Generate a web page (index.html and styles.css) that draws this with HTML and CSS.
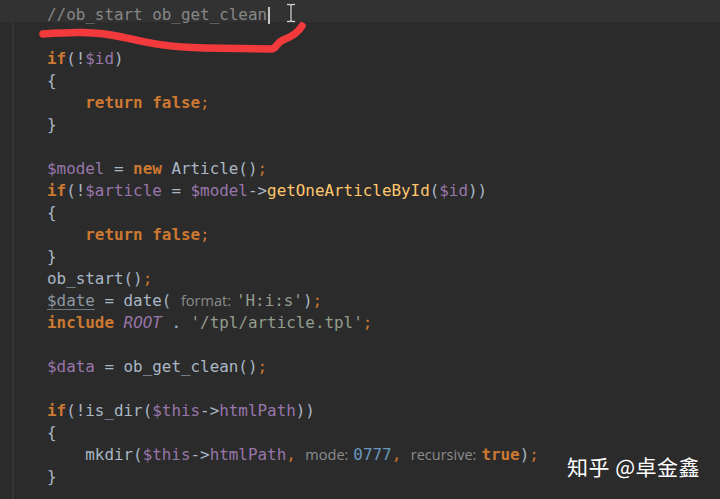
FILE: index.html
```html
<!DOCTYPE html>
<html lang="zh-CN">
<head>
    <meta charset="UTF-8">
    <title>ob_start ob_get_clean</title>
    <link rel="stylesheet" href="styles.css">
</head>
<body>
    <div class="editor">
        <div class="line current"><span class="cm">//ob_start ob_get_clean</span><span class="caret"></span></div>
        <div class="line"> </div>
        <div class="line"><span class="kw">if</span>(!<span class="var">$id</span>)</div>
        <div class="line">{</div>
        <div class="line">    <span class="kw">return false</span><span class="op">;</span></div>
        <div class="line">}</div>
        <div class="line"> </div>
        <div class="line"><span class="var">$model</span> = <span class="kw">new</span> Article()<span class="op">;</span></div>
        <div class="line"><span class="kw">if</span>(!<span class="var">$article</span> = <span class="var">$model</span>-&gt;<span class="fn">getOneArticleById</span>(<span class="var">$id</span>))</div>
        <div class="line">{</div>
        <div class="line">    <span class="kw">return false</span><span class="op">;</span></div>
        <div class="line">}</div>
        <div class="line">ob_start()<span class="op">;</span></div>
        <div class="line"><span class="unused">$date</span> = date( <span class="hint">format:</span><span class="str">'H:i:s'</span>)<span class="op">;</span></div>
        <div class="line"><span class="kw">include</span> <span class="const">ROOT</span> . <span class="str">'/tpl/article.tpl'</span><span class="op">;</span></div>
        <div class="line"> </div>
        <div class="line"><span class="var">$data</span> = ob_get_clean()<span class="op">;</span></div>
        <div class="line"> </div>
        <div class="line"><span class="kw">if</span>(!is_dir(<span class="var">$this</span>-&gt;<span class="var">htmlPath</span>))</div>
        <div class="line">{</div>
        <div class="line">    mkdir(<span class="var">$this</span>-&gt;<span class="var">htmlPath</span><span class="op">,</span> <span class="hint">mode:</span><span class="num">0777</span><span class="op">,</span> <span class="hint">recursive:</span><span class="kw">true</span>)<span class="op">;</span></div>
        <div class="line">}</div>
    </div>

    <!-- red pen mark under the comment -->
    <svg class="scribble" width="320" height="60" viewBox="0 0 320 60">
        <path d="M43 34 C 70 32, 95 31, 122 37 S 165 47, 205 48 L 272 49 C 277 48, 276 43, 283 40 C 291 37, 298 33, 302 26"
              fill="none" stroke="#f23a3c" stroke-width="7.5" stroke-linecap="round" stroke-linejoin="round"/>
    </svg>

    <!-- mouse text cursor -->
    <svg class="ibeam" width="12" height="20" viewBox="0 0 12 20">
        <path d="M2 1.5 H5 L6 2.5 L7 1.5 H10 M6 2.5 V17.5 M2 18.5 H5 L6 17.5 L7 18.5 H10"
              fill="none" stroke="#1e1e1e" stroke-width="3"/>
        <path d="M2 1.5 H5 L6 2.5 L7 1.5 H10 M6 2.5 V17.5 M2 18.5 H5 L6 17.5 L7 18.5 H10"
              fill="none" stroke="#d4d4d4" stroke-width="1.3"/>
    </svg>

    <div class="watermark">知乎 @卓金鑫</div>
</body>
</html>
```

FILE: styles.css
```css
body {
    margin: 0;
    background-color: #2b2b2b;
    overflow: hidden;
}
.editor {
    min-height: 100vh;
    padding-left: 47px;
    font-family: "DejaVu Sans Mono", "Liberation Mono", monospace;
    font-size: 15.9px;
    line-height: 22px;
    color: #a9b7c6;
    /* gutter separator */
    background: linear-gradient(to right, transparent 12px, #353535 12px, #353535 14px, transparent 14px);
}
.line {
    white-space: pre;
    height: 22px;
}
/* highlighted caret row */
.line.current {
    margin-left: -47px;
    padding-left: 47px;
    height: 18px;
    padding-top: 4px;
    margin-bottom: 4px;
    background-color: #323232;
}
.cm {
    color: #878787;
}
.caret {
    display: inline-block;
    width: 2px;
    height: 17px;
    margin-left: 1px;
    vertical-align: -4px;
    background-color: #c4c4c4;
}
.kw {
    color: #cc7832;
    font-weight: bold;
}
.op {
    color: #cc7832;
}
.var {
    color: #9876aa;
}
.fn {
    color: #ffc66d;
}
.const {
    color: #9876aa;
    font-style: italic;
}
.str {
    color: #939d8e;
}
.num {
    color: #6897bb;
}
.unused {
    color: #8c96a3;
    text-decoration: underline;
    text-decoration-color: #6f7780;
    text-underline-offset: 3px;
}
/* inline parameter hints */
.hint {
    font-family: "Open Sans", "Liberation Sans", sans-serif;
    font-size: 14.5px;
    color: #8c8c8c;
    padding: 0 5px 0 0;
}
.scribble {
    position: absolute;
    left: 0;
    top: 0;
}
.ibeam {
    position: absolute;
    left: 285px;
    top: 3px;
}
.watermark {
    position: absolute;
    left: 567px;
    top: 454px;
    font-family: "Noto Sans CJK SC", sans-serif;
    font-size: 21px;
    line-height: 24px;
    color: #ffffff;
    letter-spacing: 0.5px;
}
```
